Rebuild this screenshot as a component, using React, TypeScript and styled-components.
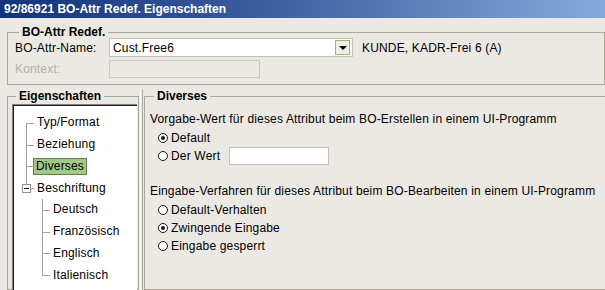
import React from "react";
import styled, { createGlobalStyle, css } from "styled-components";

const GlobalStyle = createGlobalStyle`
  html, body {
    margin: 0;
    padding: 0;
    background: #ece9e4;
  }
  body {
    font-family: "Liberation Sans", Arial, sans-serif;
    font-size: 12px;
    letter-spacing: 0.17px;
    color: #000;
  }
`;

const Window = styled.div`
  width: 605px;
  height: 290px;
  overflow: hidden;
  background: #ece9e4;
  display: flex;
  flex-direction: column;
`;

const TitleBar = styled.div`
  height: 18px;
  flex: none;
  display: flex;
  align-items: center;
  padding-left: 4px;
  background: linear-gradient(90deg, #12337a 0%, #3d5f9f 45%, #86aadc 100%);
  color: #fff;
  font-weight: bold;
  font-size: 12px;
  letter-spacing: 0;
`;

const Group = styled.fieldset<{ $bleed?: boolean }>`
  margin: 0;
  min-width: 0;
  border: 1px solid #aca899;
  padding: 0;
  ${(p) =>
    p.$bleed &&
    css`
      margin-right: -30px;
    `}
`;

const Legend = styled.legend`
  font-weight: bold;
  font-size: 12px;
  line-height: 14px;
  letter-spacing: 0;
  padding: 0 3px;
  margin-left: 4px;
`;

const TopGroup = styled(Group)`
  margin: 7px 0 0 7px;
  padding: 0 0 6px 7px;
`;

const FormRow = styled.div<{ $h: number; $top: number }>`
  display: flex;
  align-items: center;
  height: ${(p) => p.$h}px;
  margin-top: ${(p) => p.$top}px;
`;

const Label = styled.span<{ $disabled?: boolean }>`
  width: 94px;
  flex: none;
  color: ${(p) => (p.$disabled ? "#b4b1a8" : "#000")};
`;

const Combo = styled.div`
  width: 239px;
  height: 17px;
  border: 1px solid #c5c2b8;
  background: #fff;
  display: flex;
  align-items: center;
  padding-left: 3px;
`;

const ComboText = styled.span`
  flex: 1;
`;

const ComboButton = styled.span`
  width: 13px;
  height: 13px;
  margin-right: 2px;
  border: 1px solid #8cbf64;
  background: #eef0e6;
  display: flex;
  align-items: center;
  justify-content: center;
  &::after {
    content: "";
    border-left: 4px solid transparent;
    border-right: 4px solid transparent;
    border-top: 4px solid #000;
    margin-top: 1px;
  }
`;

const SideInfo = styled.span`
  margin-left: 9px;
`;

const TextBox = styled.div<{ $w: number; $disabled?: boolean }>`
  width: ${(p) => p.$w}px;
  height: 100%;
  box-sizing: border-box;
  border: 1px solid ${(p) => (p.$disabled ? "#cbc8c0" : "#c5c2b8")};
  background: ${(p) => (p.$disabled ? "#ebe9e4" : "#fff")};
`;

const Body = styled.div`
  display: flex;
  margin-top: 4px;
  flex: 1;
  min-height: 0;
`;

const SideGroup = styled(Group)`
  width: 132px;
  margin-left: 7px;
  padding: 1px 1px 0 4px;
  box-sizing: border-box;
  flex: none;
`;

const Splitter = styled.div`
  width: 1px;
  margin: 0 1px 0 1px;
  border-left: 1px solid #fff;
  border-right: 1px solid #aca899;
  flex: none;
`;

const MainGroup = styled(Group)`
  flex: 1;
  padding: 8px 0 0 5px;
`;

const Tree = styled.div`
  background: #fff;
  height: 200px;
  border-top: 1px solid #808080;
  border-left: 1px solid #808080;
  box-shadow: inset 1px 1px 0 #202020;
  padding-top: 7px;
  padding-left: 1px;
`;

const TreeRow = styled.div<{ $level: number }>`
  display: flex;
  align-items: center;
  height: 21.75px;
  padding-left: ${(p) => p.$level * 16}px;
`;

const Guide = styled.span<{ $up: boolean; $down: boolean }>`
  position: relative;
  width: 20px;
  height: 100%;
  flex: none;
  &::before {
    content: "";
    position: absolute;
    left: 12px;
    top: ${(p) => (p.$up ? "0" : "50%")};
    bottom: ${(p) => (p.$down ? "0" : "50%")};
    border-left: 1px solid #a0a0a0;
  }
  &::after {
    content: "";
    position: absolute;
    left: 12px;
    width: 8px;
    top: 50%;
    border-top: 1px solid #a0a0a0;
  }
`;

const Toggle = styled.span`
  position: absolute;
  left: 8px;
  top: 50%;
  margin-top: -4px;
  width: 7px;
  height: 7px;
  border: 1px solid #919191;
  background: #fff;
  z-index: 1;
  &::after {
    content: "";
    position: absolute;
    left: 1px;
    right: 1px;
    top: 3px;
    border-top: 1px solid #000;
  }
`;

const NodeText = styled.span<{ $selected?: boolean }>`
  padding: 1px 2px 1px 2px;
  margin-left: ${(p) => (p.$selected ? "-1px" : "0")};
  border: 1px solid ${(p) => (p.$selected ? "#5f7f44" : "transparent")};
  background: ${(p) => (p.$selected ? "#a3c986" : "transparent")};
  line-height: 13px;
`;

const Para = styled.div<{ $top: number }>`
  height: 16px;
  line-height: 16px;
  margin-top: ${(p) => p.$top}px;
`;

const RadioRow = styled.div<{ $top?: number }>`
  display: flex;
  align-items: center;
  height: 18px;
  padding-left: 8px;
  margin-top: ${(p) => p.$top ?? 0}px;
`;

const RadioDot = styled.span<{ $checked?: boolean }>`
  width: 8px;
  height: 8px;
  border: 1px solid #1a1a1a;
  border-radius: 50%;
  background: #fff;
  margin-right: 3px;
  display: flex;
  align-items: center;
  justify-content: center;
  flex: none;
  &::after {
    content: "";
    width: 4px;
    height: 4px;
    border-radius: 50%;
    background: ${(p) => (p.$checked ? "#1a1a1a" : "transparent")};
  }
`;

const ValueBox = styled(TextBox)`
  margin-left: 9px;
`;

type Node = { label: string; level: number; up: boolean; down: boolean; toggle?: boolean; selected?: boolean };

const nodes: Node[] = [
  { label: "Typ/Format", level: 0, up: false, down: true },
  { label: "Beziehung", level: 0, up: true, down: true },
  { label: "Diverses", level: 0, up: true, down: true, selected: true },
  { label: "Beschriftung", level: 0, up: true, down: false, toggle: true },
  { label: "Deutsch", level: 1, up: true, down: true },
  { label: "Französisch", level: 1, up: true, down: true },
  { label: "Englisch", level: 1, up: true, down: true },
  { label: "Italienisch", level: 1, up: true, down: false },
];

const Radio: React.FC<{ checked?: boolean; top?: number; children: React.ReactNode }> = ({ checked, top, children }) => (
  <RadioRow $top={top}>
    <RadioDot $checked={checked} />
    {children}
  </RadioRow>
);

export default function App() {
  return (
    <>
      <GlobalStyle />
      <Window>
        <TitleBar>92/86921 BO-Attr Redef. Eigenschaften</TitleBar>

        <TopGroup $bleed>
          <Legend>BO-Attr Redef.</Legend>
          <FormRow $h={19} $top={-1}>
            <Label>BO-Attr-Name:</Label>
            <Combo>
              <ComboText>Cust.Free6</ComboText>
              <ComboButton />
            </Combo>
            <SideInfo>KUNDE, KADR-Frei 6 (A)</SideInfo>
          </FormRow>
          <FormRow $h={18} $top={3}>
            <Label $disabled>Kontext:</Label>
            <TextBox $w={151} $disabled />
          </FormRow>
        </TopGroup>

        <Body>
          <SideGroup>
            <Legend>Eigenschaften</Legend>
            <Tree>
              {nodes.map((n) => (
                <TreeRow key={n.label} $level={n.level}>
                  <Guide $up={n.up} $down={n.down}>
                    {n.toggle && <Toggle />}
                  </Guide>
                  <NodeText $selected={n.selected}>{n.label}</NodeText>
                </TreeRow>
              ))}
            </Tree>
          </SideGroup>
          <Splitter />
          <MainGroup $bleed>
            <Legend>Diverses</Legend>
            <Para $top={0}>Vorgabe-Wert für dieses Attribut beim BO-Erstellen in einem UI-Programm</Para>
            <Radio checked top={2}>Default</Radio>
            <Radio>
              Der Wert
              <ValueBox $w={100} />
            </Radio>
            <Para $top={18}>Eingabe-Verfahren für dieses Attribut beim BO-Bearbeiten in einem UI-Programm</Para>
            <Radio top={2}>Default-Verhalten</Radio>
            <Radio checked>Zwingende Eingabe</Radio>
            <Radio>Eingabe gesperrt</Radio>
          </MainGroup>
        </Body>
      </Window>
    </>
  );
}
